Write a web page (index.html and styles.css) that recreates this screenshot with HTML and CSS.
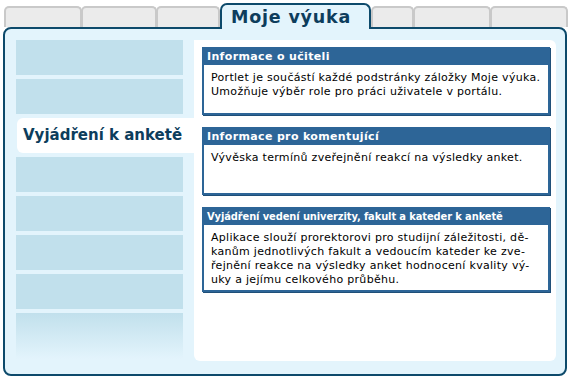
FILE: index.html
```html
<!DOCTYPE html>
<html lang="cs">
<head>
<meta charset="utf-8">
<title>Moje výuka</title>
<link rel="stylesheet" href="styles.css">
</head>
<body>
<div class="page">
  <div class="tabs">
    <div class="tab w77"></div>
    <div class="tab w75"></div>
    <div class="tab w63"></div>
    <div class="tab active">Moje výuka</div>
    <div class="tab w42"></div>
    <div class="tab w77"></div>
    <div class="tab w77"></div>
  </div>
  <div class="panel">
    <div class="menu">
      <div class="item"></div>
      <div class="item"></div>
      <div class="item current">Vyjádření k anketě</div>
      <div class="item"></div>
      <div class="item"></div>
      <div class="item"></div>
      <div class="item"></div>
      <div class="item fade"></div>
    </div>
    <div class="content">
      <div class="portlet">
        <div class="portlet-head">Informace o učiteli</div>
        <div class="portlet-body">Portlet je součástí každé podstránky záložky Moje výuka.<br>Umožňuje výběr role pro práci uživatele v portálu.</div>
      </div>
      <div class="portlet">
        <div class="portlet-head">Informace pro komentující</div>
        <div class="portlet-body">Vývěska termínů zveřejnění reakcí na výsledky anket.</div>
      </div>
      <div class="portlet">
        <div class="portlet-head narrow">Vyjádření vedení univerzity, fakult a kateder k anketě</div>
        <div class="portlet-body">Aplikace slouží prorektorovi pro studijní záležitosti, dě-<br>kanům jednotlivých fakult a vedoucím kateder ke zve-<br>řejnění reakce na výsledky anket hodnocení kvality vý-<br>uky a jejímu celkového průběhu.</div>
      </div>
    </div>
  </div>
</div>
</body>
</html>
```

FILE: styles.css
```css
html, body {
  margin: 0;
  padding: 0;
  background: #ffffff;
}

body {
  font-family: "DejaVu Sans", Verdana, sans-serif;
  font-size: 11px;
  color: #000;
}

.page {
  width: 571px;
  height: 380px;
  padding-top: 3px;
  box-sizing: border-box;
}

.tabs {
  display: flex;
  align-items: flex-end;
  margin-left: 4px;
  height: 24px;
  position: relative;
  z-index: 2;
}

.tab {
  height: 21px;
  background: #ebebeb;
  border: 2px solid #c9c9c9;
  border-bottom: none;
  border-radius: 5px 5px 0 0;
  box-sizing: border-box;
}

.tab + .tab {
  margin-left: -1px;
}

.w77 { width: 78px; }
.w75 { width: 76px; }
.w63 { width: 64px; }
.w42 { width: 43px; }

.tab.active {
  width: 151px;
  height: 26px;
  margin-bottom: -2px;
  margin-left: 0;
  background: #e3f4fc;
  border: 2px solid #0d4a6b;
  border-bottom: none;
  border-radius: 7px 7px 0 0;
  color: #0d3d5c;
  font-weight: bold;
  font-size: 17.5px;
  letter-spacing: 0.8px;
  line-height: 20px;
  padding: 2px 0 0 9px;
  position: relative;
  z-index: 3;
}

.tab.active + .tab {
  margin-left: 0;
}

.panel {
  margin-left: 3px;
  width: 564px;
  height: 349px;
  box-sizing: border-box;
  border: 2px solid #0d4a6b;
  border-radius: 8px;
  background: #e3f4fc;
  padding: 11px 9px 13px 11px;
  display: flex;
  position: relative;
  z-index: 1;
}

.menu {
  width: 178px;
  display: flex;
  flex-direction: column;
  gap: 4px;
  flex: none;
}

.item {
  width: 167px;
  height: 35px;
  background: #c1e0ec;
  box-sizing: border-box;
}

.item.current {
  width: 177px;
  background: #ffffff;
  border-radius: 6px 0 0 6px;
  color: #0d3d5c;
  font-weight: bold;
  font-size: 15px;
  line-height: 18px;
  padding: 8px 0 0 6px;
  margin-left: 1px;
  white-space: nowrap;
}

.item.fade {
  height: 46px;
  background: linear-gradient(#c1e0ec, #e3f4fc);
}

.content {
  flex: 1;
  min-width: 0;
  background: #ffffff;
  border-radius: 0 6px 6px 6px;
  padding: 7px 6px 0 8px;
  display: flex;
  flex-direction: column;
  gap: 12px;
}

.portlet {
  border: 2px solid #2d6597;
  box-shadow: 1px 1px 0 #1f4f78;
}

.portlet-head {
  background: #2d6597;
  color: #ffffff;
  font-weight: bold;
  font-size: 11px;
  letter-spacing: 0.35px;
  height: 16px;
  line-height: 15px;
  padding-left: 3px;
  white-space: nowrap;
  overflow: hidden;
}

.portlet-head.narrow {
  font-family: "DejaVu Sans Condensed", "DejaVu Sans", sans-serif;
  font-stretch: condensed;
  letter-spacing: -0.1px;
}

.portlet-body {
  padding: 6px 6px 3px 7px;
  line-height: 14px;
  letter-spacing: 0.3px;
  min-height: 48px;
  box-sizing: border-box;
  white-space: nowrap;
  overflow: hidden;
}
```
